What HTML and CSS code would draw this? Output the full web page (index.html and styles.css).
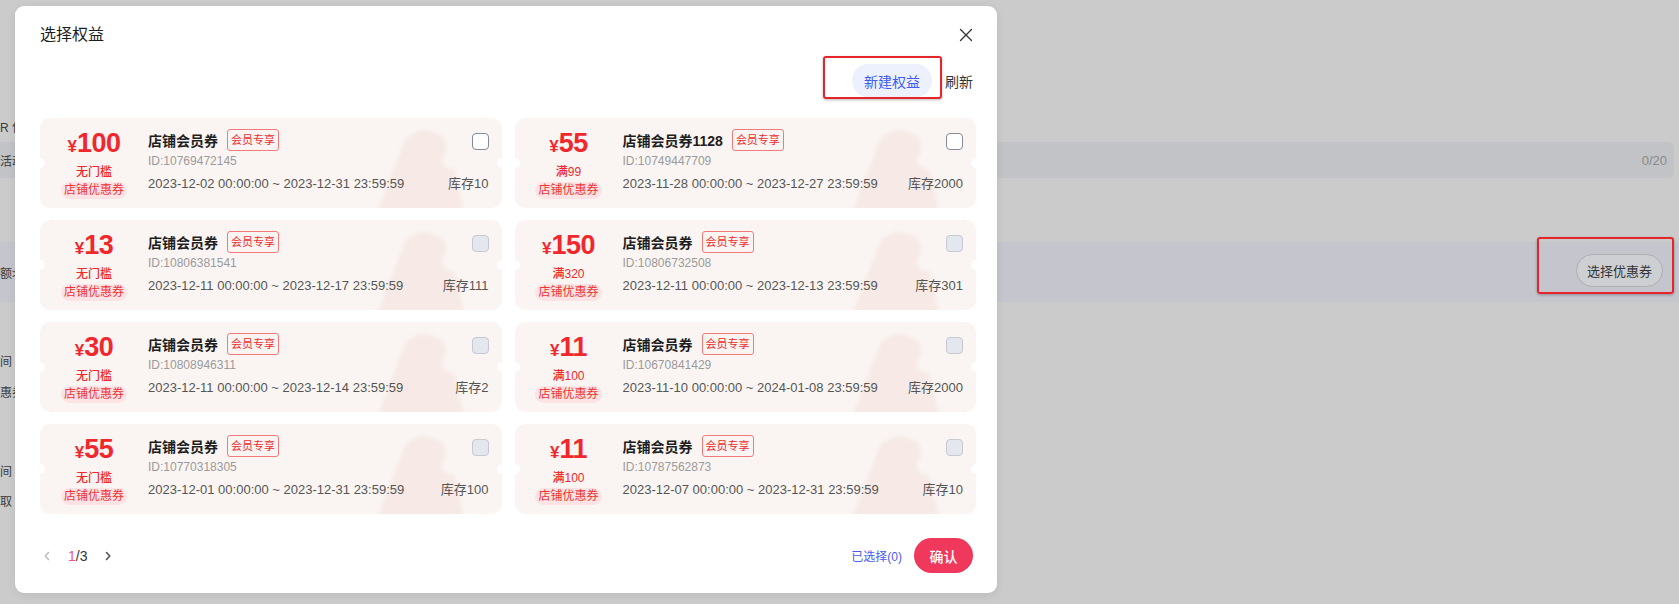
FILE: index.html
```html
<!DOCTYPE html>
<html lang="zh-CN">
<head>
<meta charset="utf-8">
<title>选择权益</title>
<link rel="stylesheet" href="styles.css">
</head>
<body>
<svg class="defs" width="0" height="0" aria-hidden="true">
  <defs>
    <filter id="soft" x="-20%" y="-20%" width="140%" height="140%">
      <feGaussianBlur stdDeviation="2.2"/>
    </filter>
    <symbol id="wm" viewBox="0 0 120 90">
      <g filter="url(#soft)">
        <path d="M52 16 Q60 10 70 13 L80 17 Q86 20 86 27 L86 34 A9 9 0 0 0 94 50 L104 92 L18 92 L44 24 Q46 19 52 16 Z" fill="#f1cfc6" opacity="0.32"/>
      </g>
    </symbol>
  </defs>
</svg>

<!-- underlying form, dimmed by the dialog -->
<div class="page">
  <div class="line line-a"><span>R 位置信息</span></div>
  <div class="input-bar"><span class="ib-text">活动名称</span><span class="ib-count">0/20</span></div>
  <div class="band">
    <span class="band-label">额&gt;</span>
    <span class="pick-wrap">
      <button class="pick">选择优惠券</button>
      <i class="mark mark-pick"></i>
    </span>
  </div>
  <div class="line line-b"><span>间</span></div>
  <div class="line line-c"><span>惠券</span></div>
  <div class="line line-d"><span>间</span></div>
  <div class="line line-e"><span>取</span></div>
</div>

<div class="modal">
  <div class="m-head">
    <h2 class="m-title">选择权益</h2>
    <button class="close" aria-label="关闭">
      <svg width="14" height="14" viewBox="0 0 14 14"><path d="M1.5 1.5 L12.5 12.5 M12.5 1.5 L1.5 12.5" stroke="#333" stroke-width="1.3" fill="none" stroke-linecap="round"/></svg>
    </button>
  </div>

  <div class="m-tools">
    <span class="create-wrap">
      <button class="create">新建权益</button>
      <i class="mark mark-create"></i>
    </span>
    <button class="refresh">刷新</button>
  </div>

  <div class="grid">
    <div class="card">
      <svg class="wm"><use href="#wm"/></svg>
      <div class="amt-col"><div class="amt"><span class="yen">¥</span><span class="num">100</span></div><div class="cond">无门槛</div><div class="kind">店铺优惠券</div></div>
      <div class="info">
        <div class="row1"><span class="name">店铺会员券</span><span class="tag">会员专享</span><span class="chk on"></span></div>
        <div class="id">ID:10769472145</div>
        <div class="row3"><span>2023-12-02 00:00:00 ~ 2023-12-31 23:59:59</span><span>库存10</span></div>
      </div>
    </div>
    <div class="card">
      <svg class="wm"><use href="#wm"/></svg>
      <div class="amt-col"><div class="amt"><span class="yen">¥</span><span class="num">55</span></div><div class="cond">满99</div><div class="kind">店铺优惠券</div></div>
      <div class="info">
        <div class="row1"><span class="name">店铺会员券1128</span><span class="tag">会员专享</span><span class="chk on"></span></div>
        <div class="id">ID:10749447709</div>
        <div class="row3"><span>2023-11-28 00:00:00 ~ 2023-12-27 23:59:59</span><span>库存2000</span></div>
      </div>
    </div>
    <div class="card">
      <svg class="wm"><use href="#wm"/></svg>
      <div class="amt-col"><div class="amt"><span class="yen">¥</span><span class="num">13</span></div><div class="cond">无门槛</div><div class="kind">店铺优惠券</div></div>
      <div class="info">
        <div class="row1"><span class="name">店铺会员券</span><span class="tag">会员专享</span><span class="chk"></span></div>
        <div class="id">ID:10806381541</div>
        <div class="row3"><span>2023-12-11 00:00:00 ~ 2023-12-17 23:59:59</span><span>库存111</span></div>
      </div>
    </div>
    <div class="card">
      <svg class="wm"><use href="#wm"/></svg>
      <div class="amt-col"><div class="amt"><span class="yen">¥</span><span class="num">150</span></div><div class="cond">满320</div><div class="kind">店铺优惠券</div></div>
      <div class="info">
        <div class="row1"><span class="name">店铺会员券</span><span class="tag">会员专享</span><span class="chk"></span></div>
        <div class="id">ID:10806732508</div>
        <div class="row3"><span>2023-12-11 00:00:00 ~ 2023-12-13 23:59:59</span><span>库存301</span></div>
      </div>
    </div>
    <div class="card">
      <svg class="wm"><use href="#wm"/></svg>
      <div class="amt-col"><div class="amt"><span class="yen">¥</span><span class="num">30</span></div><div class="cond">无门槛</div><div class="kind">店铺优惠券</div></div>
      <div class="info">
        <div class="row1"><span class="name">店铺会员券</span><span class="tag">会员专享</span><span class="chk"></span></div>
        <div class="id">ID:10808946311</div>
        <div class="row3"><span>2023-12-11 00:00:00 ~ 2023-12-14 23:59:59</span><span>库存2</span></div>
      </div>
    </div>
    <div class="card">
      <svg class="wm"><use href="#wm"/></svg>
      <div class="amt-col"><div class="amt"><span class="yen">¥</span><span class="num">11</span></div><div class="cond">满100</div><div class="kind">店铺优惠券</div></div>
      <div class="info">
        <div class="row1"><span class="name">店铺会员券</span><span class="tag">会员专享</span><span class="chk"></span></div>
        <div class="id">ID:10670841429</div>
        <div class="row3"><span>2023-11-10 00:00:00 ~ 2024-01-08 23:59:59</span><span>库存2000</span></div>
      </div>
    </div>
    <div class="card">
      <svg class="wm"><use href="#wm"/></svg>
      <div class="amt-col"><div class="amt"><span class="yen">¥</span><span class="num">55</span></div><div class="cond">无门槛</div><div class="kind">店铺优惠券</div></div>
      <div class="info">
        <div class="row1"><span class="name">店铺会员券</span><span class="tag">会员专享</span><span class="chk"></span></div>
        <div class="id">ID:10770318305</div>
        <div class="row3"><span>2023-12-01 00:00:00 ~ 2023-12-31 23:59:59</span><span>库存100</span></div>
      </div>
    </div>
    <div class="card">
      <svg class="wm"><use href="#wm"/></svg>
      <div class="amt-col"><div class="amt"><span class="yen">¥</span><span class="num">11</span></div><div class="cond">满100</div><div class="kind">店铺优惠券</div></div>
      <div class="info">
        <div class="row1"><span class="name">店铺会员券</span><span class="tag">会员专享</span><span class="chk"></span></div>
        <div class="id">ID:10787562873</div>
        <div class="row3"><span>2023-12-07 00:00:00 ~ 2023-12-31 23:59:59</span><span>库存10</span></div>
      </div>
    </div>
  </div>

  <div class="m-foot">
    <div class="pager">
      <button class="pg prev" aria-label="上一页"><svg width="12" height="12" viewBox="0 0 12 12"><path d="M7.5 2.5 L4.2 6 L7.5 9.5" stroke="#bdbdbd" stroke-width="1.6" fill="none" stroke-linecap="round" stroke-linejoin="round"/></svg></button>
      <span class="pg-num"><span class="cur">1</span>/3</span>
      <button class="pg next" aria-label="下一页"><svg width="12" height="12" viewBox="0 0 12 12"><path d="M4.5 2.5 L7.8 6 L4.5 9.5" stroke="#555" stroke-width="1.6" fill="none" stroke-linecap="round" stroke-linejoin="round"/></svg></button>
    </div>
    <div class="foot-right">
      <span class="picked">已选择(0)</span>
      <button class="confirm">确认</button>
    </div>
  </div>
</div>
</body>
</html>
```

FILE: styles.css
```css
* { box-sizing: border-box; }

html, body {
  margin: 0;
  padding: 0;
}

body {
  width: 1679px;
  height: 604px;
  overflow: hidden;
  position: relative;
  background: #cbcbcb;
  font-family: "Liberation Sans", "Noto Sans CJK SC", sans-serif;
  color: #333;
}

button {
  font: inherit;
  border: none;
  background: none;
  padding: 0;
  margin: 0;
  cursor: pointer;
}

.defs { position: absolute; width: 0; height: 0; }

/* ---------- underlying form ---------- */
.page {
  display: flex;
  flex-direction: column;
  padding-top: 118px;
}

.line {
  height: 20px;
  line-height: 20px;
  font-size: 12px;
  color: #3c3c3c;
  white-space: nowrap;
}
.line-b { margin-top: 50px; }
.line-c { margin-top: 11px; }
.line-d { margin-top: 59px; }
.line-e { margin-top: 10px; }

.input-bar {
  margin: 4px 5px 0 -20px;
  height: 36px;
  border-radius: 6px;
  background: #c2c3c7;
  padding: 0 7px 0 20px;
  display: flex;
  align-items: center;
  justify-content: space-between;
  font-size: 12px;
  white-space: nowrap;
}
.ib-text { color: #3c3c3c; }
.ib-count { color: #8a8a8a; font-size: 13px; }

.band {
  margin-top: 64px;
  height: 60px;
  background: #c4c5cd;
  display: flex;
  align-items: center;
  justify-content: space-between;
  padding-right: 16px;
  font-size: 12px;
  white-space: nowrap;
}
.band-label { color: #3c3c3c; }

.pick-wrap {
  position: relative;
  margin-top: -3px;
}
.pick {
  height: 33px;
  padding: 0 10px;
  border: 1px solid #adaeb2;
  border-radius: 17px;
  background: #cecfd3;
  font-size: 13px;
  color: #333;
}

/* red annotation frames */
.mark {
  position: absolute;
  border: 2px solid #e4262b;
  border-radius: 3px;
  box-shadow: 0 1px 3px rgba(0, 0, 0, 0.28);
  pointer-events: none;
}
.mark-pick { left: -39px; right: -11px; top: -17px; bottom: -7px; }
.mark-create { left: -29px; right: -10px; top: -8px; bottom: -2px; }

/* ---------- dialog ---------- */
.modal {
  position: absolute;
  left: 15px;
  top: 6px;
  width: 982px;
  background: #fff;
  border-radius: 9px;
  box-shadow: 0 2px 10px rgba(0, 0, 0, 0.08);
  padding: 17px 24px 20px 25px;
  display: flex;
  flex-direction: column;
}

.m-head {
  height: 24px;
  display: flex;
  align-items: center;
  justify-content: space-between;
}
.m-title {
  margin: 0;
  font-size: 16px;
  line-height: 24px;
  font-weight: 400;
  color: #1d1d1d;
}
.close {
  width: 16px;
  height: 16px;
  margin-right: -1px;
  display: flex;
  align-items: center;
  justify-content: center;
}

.m-tools {
  margin-top: 17px;
  height: 33px;
  display: flex;
  align-items: center;
  justify-content: flex-end;
  gap: 13px;
}
.create-wrap { position: relative; display: flex; }
.create {
  height: 33px;
  padding: 0 12px;
  border-radius: 17px;
  background: #edf0fd;
  color: #3d5bf5;
  font-size: 14px;
}
.refresh {
  font-size: 14px;
  color: #333;
}

.grid {
  margin-top: 21px;
  margin-right: -3px;
  display: grid;
  grid-template-columns: 1fr 1fr;
  column-gap: 13px;
  row-gap: 12px;
}

.card {
  position: relative;
  height: 90px;
  border-radius: 10px;
  background: #faf5f3;
  overflow: hidden;
  display: flex;
}
.card::before,
.card::after {
  content: "";
  position: absolute;
  top: 40px;
  width: 10px;
  height: 10px;
  border-radius: 50%;
  background: #fff;
}
.card::before { left: -5px; }
.card::after { right: -5px; }

.wm {
  position: absolute;
  left: 320px;
  top: 0;
  width: 120px;
  height: 90px;
}

.amt-col {
  position: relative;
  width: 108px;
  flex-shrink: 0;
  padding-top: 10px;
  display: flex;
  flex-direction: column;
  align-items: center;
  color: #f0282d;
}
.amt {
  line-height: 30px;
  font-weight: 700;
  white-space: nowrap;
}
.yen { font-size: 17px; }
.num { font-size: 27px; letter-spacing: -0.5px; }
.cond {
  margin-top: 2px;
  font-size: 12px;
  line-height: 16px;
  font-weight: 500;
}
.kind {
  margin-top: 2px;
  height: 17px;
  line-height: 17px;
  padding: 0 3px;
  border-radius: 9px;
  background: #fde3e3;
  font-size: 12px;
  color: #ee3434;
}

.info {
  position: relative;
  flex: 1;
  min-width: 0;
  padding: 11px 13px 0 0;
}
.row1 {
  height: 22px;
  display: flex;
  align-items: center;
}
.name {
  font-size: 14px;
  font-weight: 600;
  color: #1e1e1e;
}
.tag {
  margin-left: 9px;
  height: 22px;
  line-height: 20px;
  padding: 0 3px;
  border: 1px solid #f37a7a;
  border-radius: 3px;
  font-size: 11px;
  color: #ee2b2b;
}
.chk {
  margin-left: auto;
  margin-top: 2px;
  width: 17px;
  height: 17px;
  border-radius: 4px;
  border: 1px solid #c6c9d2;
  background: #e5e7ee;
}
.chk.on {
  border: 1.5px solid #858897;
  background: #fff;
}
.id {
  line-height: 20px;
  font-size: 12px;
  color: #9a9a9a;
}
.row3 {
  margin-top: 3px;
  line-height: 20px;
  display: flex;
  justify-content: space-between;
  font-size: 13px;
  color: #555;
  white-space: nowrap;
}

.m-foot {
  margin-top: 24px;
  height: 35px;
  display: flex;
  align-items: center;
  justify-content: space-between;
}
.pager {
  padding-left: 1px;
  display: flex;
  align-items: center;
  gap: 15px;
}
.pg {
  width: 12px;
  height: 12px;
  display: flex;
}
.pg-num {
  font-size: 14px;
  color: #333;
}
.cur { color: #f2567a; }

.foot-right {
  display: flex;
  align-items: center;
  gap: 12px;
}
.picked {
  font-size: 12px;
  color: #4a5bf0;
}
.confirm {
  height: 35px;
  padding: 0 15.5px;
  border-radius: 18px;
  background: #f0385c;
  color: #fff;
  font-size: 14px;
  font-weight: 500;
}
```
